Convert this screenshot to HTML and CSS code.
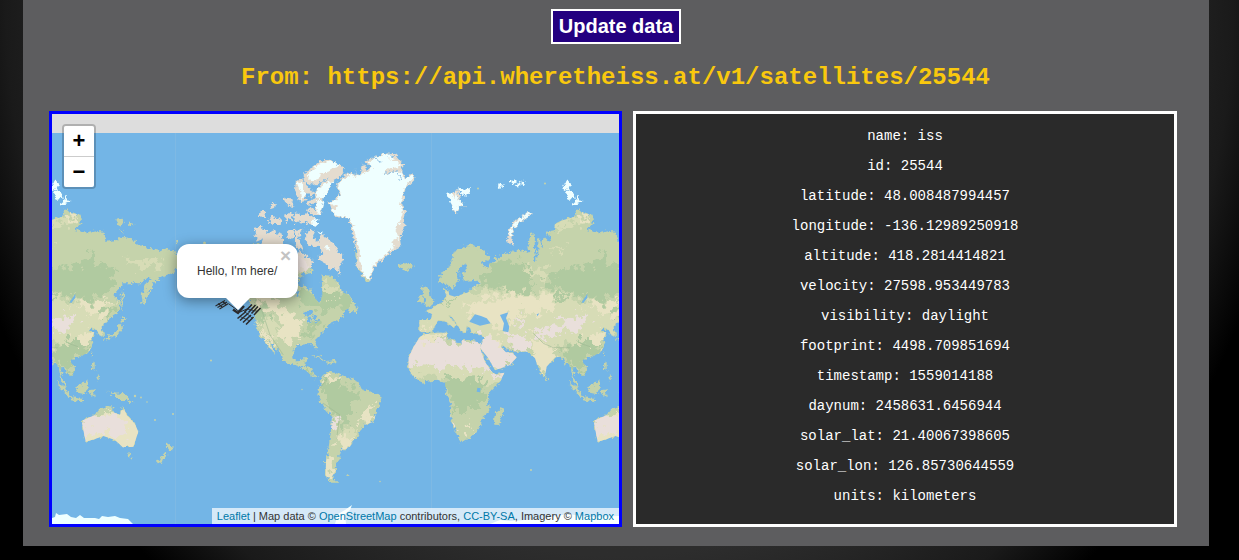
FILE: index.html
```
<!DOCTYPE html>
<html lang="en">
<head>
<meta charset="utf-8">
<title>ISS tracker</title>
<link rel="stylesheet" href="styles.css">
</head>
<body>
<main class="panel">
  <button class="update">Update data</button>
  <h2 class="source">From: https://api.wheretheiss.at/v1/satellites/25544</h2>
  <div class="columns">
    <section class="map">
      <svg class="world" viewBox="52 114 567 410" width="567" height="410">
        <defs>
          <filter id="rough" x="-5%" y="-5%" width="110%" height="110%" color-interpolation-filters="sRGB">
            <feTurbulence type="fractalNoise" baseFrequency=".09" numOctaves="3" seed="4" result="n"/>
            <feDisplacementMap in="SourceGraphic" in2="n" scale="20" xChannelSelector="R" yChannelSelector="G"/>
          </filter>
          <filter id="patchy" x="-20%" y="-20%" width="140%" height="140%" color-interpolation-filters="sRGB">
            <feTurbulence type="fractalNoise" baseFrequency=".045" numOctaves="4" seed="9" result="n"/>
            <feDisplacementMap in="SourceGraphic" in2="n" scale="70" xChannelSelector="R" yChannelSelector="G"/>
            <feGaussianBlur stdDeviation="1.5"/>
          </filter>
          <path id="eurasia" d="M58 645L92 645 97 628 78 618 95 612 110 600 130 590 140 575 132 553 142 550 148 570 165 575 205 562 222 543 245 536 230 524 192 528 188 510 202 480 192 476 174 502 176 530 160 552 146 545 134 535 118 530 118 515 128 500 145 490 155 465 165 440 190 425 215 418 235 428 262 448 272 460 262 470 245 468 250 485 266 488 270 472 285 472 288 455 297 462 305 450 330 443 355 432 375 440 388 445 385 420 390 390 405 388 404 430 408 450 398 468 412 462 412 400 420 400 425 430 430 395 445 410 450 400 440 380 462 376 465 358 490 345 525 335 535 310 550 325 578 330 582 350 560 375 600 385 628 378 646 380 653 410 686 405 696 395 721 398 756 420 781 430 816 438 831 430 863 440 880 470 861 500 816 520 796 535 786 560 764 600 761 570 776 535 791 515 771 520 756 535 706 535 676 570 696 590 693 620 676 630 651 655 640 665 648 690 636 692 626 675 611 667 601 680 619 682 611 700 616 715 601 742 571 758 556 758 546 768 561 790 556 808 546 813 531 795 519 785 521 815 536 840 531 848 516 820 513 785 501 775 495 778 485 755 465 757 440 785 435 813 428 817 415 790 405 760 395 750 380 740 345 740 325 735 305 718 303 727 318 742 335 742 350 757 330 780 285 796 265 760 240 728 248 710 245 690 215 683 210 668 200 662 198 683 183 677 165 648 150 630 145 632 170 660 160 667 135 648 115 645 95 680 65 682 58 678Z"/>
          <path id="africa" d="M60 695L75 688 110 683 140 683 142 697 180 716 187 705 215 708 243 713 240 730 255 770 275 800 285 808 313 803 300 830 268 865 262 880 268 918 245 938 243 963 210 1003 180 1009 172 990 160 960 148 925 153 890 137 862 135 833 115 825 62 833 40 817 25 790 25 760 40 727Z"/>
          <path id="australia" d="M581 947L621 930 636 912 656 903 676 905 676 922 696 930 703 900 716 930 741 957 751 980 736 1025 706 1028 681 1005 646 993 621 1002 593 1010 586 975Z"/>
          <path id="namerica" d="M-60 430L100 415 160 440 200 470 215 500 180 510 175 540 215 555 225 580 240 597 247 570 245 510 275 512 300 540 305 560 330 572 340 600 350 620 318 612 315 630 295 645 270 657 250 680 225 705 232 735 220 722 208 717 175 720 160 738 160 760 175 773 190 760 203 760 195 785 218 790 218 810 235 818 225 820 198 797 175 783 130 770 125 750 100 722 85 705 108 750 78 715 60 690 47 660 45 625 28 590-10 560Z"/>
          <path id="samerica" d="M245 815L270 800 305 810 355 830 365 852 410 865 427 880 410 915 402 950 372 960 350 1000 335 1010 330 1028 305 1035 300 1050 290 1075 287 1098 275 1115 295 1133 270 1133 257 1110 258 1070 267 1020 272 985 276 935 252 908 232 870 240 838Z"/>
          <clipPath id="cEast"><use href="#eurasia"/><use href="#africa"/><use href="#australia"/></clipPath>
          <clipPath id="cWest"><use href="#namerica"/><use href="#samerica"/></clipPath>
          <g id="east">
            <g filter="url(#rough)">
              <g class="land">
                <use href="#eurasia"/><use href="#africa"/><use href="#australia"/>
                <path d="M311 905L311 925 295 963 283 962 282 945 285 925Z M435 810L445 822 440 828Z M722 1044L729 1044 727 1058 718 1055Z M836 1012L857 1027 848 1042 838 1035Z M832 1040L838 1048 818 1077 806 1072Z"/>
                <path d="M70 543L84 548 88 570 100 585 97 600 76 604 82 590 74 575Z M54 578L70 568 70 590 54 595Z M506 828L530 845 550 876 540 875 520 855Z M561 848L590 830 602 822 600 845 590 868 570 863Z M548 876L588 883 585 892 548 886Z M606 855L625 852 614 862 622 875 612 866 608 875Z M655 855L678 865 710 868 737 895 715 885 690 885 680 870Z M612 772L620 775 620 795 630 800 612 793Z M625 806L637 815 632 827Z M614 742L609 756 609 745Z M702 553L708 570 705 598 700 620 700 595Z M697 635L715 645 702 654Z M700 655L702 675 692 690 670 695 665 700 650 705 658 694 683 683 690 665Z"/>
                <path d="M682 343L700 338 712 350 700 362 685 355Z M720 352L740 358 730 362Z M695 376L708 382 698 384Z M860 412L872 408 872 415Z"/>
              </g>
              <g class="tundra">
                <path d="M320 412L328 372 343 346 360 338 388 320 392 330 370 347 352 357 340 380 334 402 342 420Z M158 262L175 252 180 285 196 312 184 304 176 312 166 326 155 300Z"/>
              </g>
              <g class="ice">
                <path d="M142 263L155 262 163 280 168 258 176 280 182 292 192 298 192 306 184 300 176 308 166 322 157 300 148 288Z M175 248L188 252 210 250 208 265 195 275 178 262Z M326 395L332 372 346 350 360 340 388 322 390 330 370 345 350 355 338 378 332 400Z"/>
                <path d="M290 240L300 238 310 235 300 250Z M300 246L314 240 310 250Z M330 238L345 222 350 230 340 242Z M346 244L358 233 364 244Z M362 235L374 226 374 238Z M488 245L500 225 513 240 508 252 492 258Z M496 258L518 254 524 282 506 284Z M532 273L547 290 520 302Z"/>
              </g>
            </g>
            <g clip-path="url(#cEast)">
              <g filter="url(#patchy)">
                <path class="pale" d="M60 570L200 560 330 555 470 560 560 590 690 590 640 690 500 720 380 740 230 690 40 700 40 640Z M20 780L280 775 310 830 250 850 120 815 20 815Z M365 500L440 485 440 520 390 515Z M460 350L560 330 570 350 470 370Z M440 430L500 430 490 445Z M720 470L800 455 840 480 760 490Z"/>
                <path class="green" d="M235 510L300 470 350 465 385 500 400 550 345 570 300 545 240 545Z M440 510L520 490 580 480 610 440 620 480 675 485 685 540 600 590 500 560 450 545Z M135 820L250 815 250 850 240 915 160 915 150 860Z M490 740L540 705 610 705 600 745 560 765 560 800 500 780Z M440 575L520 560 500 580Z M625 630L690 600 680 630 650 650Z M120 590L170 580 150 595Z"/>
                <path class="sand" d="M200 600L260 575 450 570 470 600 430 625 340 625 320 690 250 640 200 630Z M60 665L90 665 80 680Z M390 690L480 740 430 810 400 770Z M60 690L140 685 130 700 60 710Z M560 700L600 670 620 700 590 730Z M550 605L660 580 640 640 600 620Z M250 690L290 690 340 750 300 740Z M200 960L225 975 205 985Z M570 940L770 890 765 1040 570 1020Z M520 325L570 330 560 350Z"/>
                <path class="desert" d="M10 725L50 705 140 710 180 710 265 705 275 795 220 790 140 785 10 778Z M245 690L285 695 310 740 360 750 335 790 285 800 250 730Z M320 685L380 695 385 740 340 735Z M405 690L450 660 530 630 565 640 535 680 480 680 430 700Z M335 630L370 640 360 670Z M565 940L640 930 720 940 715 995 660 980 575 990Z M140 915L155 945 175 985 165 995 140 930Z M285 800L315 800 295 820Z"/>
              </g>
              <path class="water" d="M208 650L225 628 243 633 260 640 272 655 240 662Z M300 630L325 622 318 640 328 665 325 682 308 678 312 655Z M232 848L242 850 240 862 230 860Z M410 628L418 625 412 634Z M545 592L562 566 562 578 550 594Z"/>
              <path class="ridge" d="M400 685L430 715 460 728 510 728M540 715L570 725"/>
            </g>
          </g>
        </defs>
        <rect class="water" x="52" y="133" width="567" height="391"/>
        <path class="seam" d="M175.500 133V524M431.500 133V524"/>
        <g transform="translate(400 105) scale(.33333)"><use href="#east"/><use href="#east" x="-1536"/></g>
        <g transform="translate(240 105) scale(.33333)">
          <g filter="url(#rough)">
            <g class="land">
              <use href="#namerica"/><use href="#samerica"/>
              <path d="M216 750L235 752 260 768 235 760Z M262 768L282 765 288 772 262 776Z M318 555L345 600 340 610 325 595Z M330 600L352 605 352 622 328 622Z M313 1110L330 1106 322 1114Z M475 480L490 472 515 475 518 485 500 497 482 492Z M545 545L555 543 563 560 570 580 580 585 575 600 555 602 560 588 550 570Z M535 578L550 568 548 592 534 594Z M346 420L358 440 362 475 375 510 390 530 375 528 352 490 346 455Z"/>
            </g>
            <g class="tundra">
              <path d="M42 368L62 365 82 375 70 400 50 408Z M75 385L105 375 110 390 125 382 130 425 60 425Z M85 350L98 330 105 342 125 340 122 360 95 360Z M52 335L68 315 80 320 70 338Z M93 295L108 290 104 308 92 312Z M128 275L140 282 148 278 168 308 155 308 135 290Z M132 332L155 325 160 350 148 342 140 352Z M160 320L185 328 200 325 235 350 230 362 185 352 165 355Z M145 375L162 375 158 400 142 402Z M165 375L187 372 176 395 190 440 165 420Z M198 380L225 375 215 400 235 410 245 385 262 398 290 430 312 470 298 480 300 510 285 490 262 495 262 478 230 460 250 450 235 425 210 425 195 400Z M175 440L205 455 220 470 205 495 175 508Z M200 382L218 376 210 395Z"/>
              <path d="M168 225L188 220 205 250 225 262 215 280 200 262 195 288 182 292 165 255Z M190 205L215 190 240 170 265 163 315 188 300 215 280 225 270 250 250 280 243 330 225 330 200 318 205 305 225 312 228 295 205 300 205 285 230 280 222 262 250 232 220 240 195 230Z"/>
              <path d="M265 293L290 278 300 265 288 240 310 212 335 200 345 212 365 200 360 185 372 178 385 192 395 185 375 170 405 155 440 145 465 148 480 165 492 182 480 195 500 215 515 206 527 218 500 245 490 270 487 300 498 320 492 345 494 370 480 400 484 425 450 444 430 462 400 488 390 528 368 514 350 480 350 440 342 410 335 370 325 340 290 337 275 320Z"/>
            </g>
            <g class="ice">
              <path d="M268 295L290 282 304 265 292 242 312 218 335 205 345 216 368 205 385 200 400 185 385 172 405 160 440 148 460 152 470 166 445 160 475 175 485 185 450 190 430 205 465 202 480 200 495 220 515 210 520 220 498 243 487 270 480 300 488 325 482 350 465 370 475 400 455 410 465 430 445 438 428 456 398 482 388 525 370 510 362 475 358 430 350 410 342 370 328 338 290 332 275 318 295 305Z"/>
              <path d="M200 215L215 195 240 175 265 168 300 178 265 200 240 205 235 225 215 230Z M170 235L185 230 197 268 185 285 180 260Z M230 255L265 230 280 230 262 258 250 280 232 280Z M215 345L235 342 233 362 218 360Z M256 418L272 430 262 436Z M232 378L247 384 240 390Z M228 285L252 285 238 330 230 318Z"/>
            </g>
            <path class="inlet" d="M190 230L205 242 235 240 262 220M205 262L215 285M345 190L352 212M365 175L385 195M395 155L425 172M435 205L470 200 482 225M465 155L440 152"/>
          </g>
          <g clip-path="url(#cWest)">
            <g filter="url(#patchy)">
              <path class="sand" d="M30 570L100 570 140 620 190 650 175 700 150 720 110 700 130 650 70 600Z M295 985L340 1000 340 1040 295 1035Z M245 1060L275 1060 280 1120 250 1120Z M45 650L80 690 110 750 70 700Z M250 850L270 810 300 810 270 850Z M350 960L400 890 390 950Z"/>
              <path class="green" d="M170 560L330 560 330 610 240 620 180 600Z M50 590L80 620 80 650 50 650Z M190 680L230 640 240 670 200 700Z M245 830L290 830 330 850 370 860 330 900 330 950 305 975 290 920 250 890Z M185 775L220 790 215 810 190 790Z"/>
              <path class="pale" d="M80 630L110 660 120 720 70 680Z M310 980L350 960 340 1000 310 1000Z M230 545L290 540 300 570 250 570Z"/>
              <path class="desert" d="M276 925L292 940 288 980 272 975Z M100 440L190 450 210 500 160 500Z"/>
            </g>
            <path class="ridge" d="M240 850L270 810M250 895L300 930 290 1000M60 600L90 690 130 750"/>
          </g>
          <path class="water" filter="url(#rough)" d="M188 625L210 614 222 628 200 632Z M203 635L213 635 208 657 201 652Z M215 632L230 632 228 645 220 646Z M222 650L242 643 232 654Z M165 550L178 572 168 578Z"/>
        </g>
        <g class="ice">
          <path d="M52 518L55 517 56 513 59 515 67 514 71 517 76 518 80 515 84 518 95 518 99 519 102 516 108 517 115 516 120 518 128 519 134 525H52Z M490 524L500 520 510 521 540 519 568 514 590 517 619 516V525H490Z M335 524L338 514 345 510 352 505 350 510 345 514 346 524Z"/>
        </g>
        <g class="land">
          <circle cx="211" cy="360.500" r="1"/><circle cx="173" cy="414" r="1"/><circle cx="155" cy="420" r="1"/><circle cx="147" cy="402" r=".8"/><circle cx="141" cy="397.500" r=".9"/><circle cx="135" cy="396" r="1.200"/><circle cx="302" cy="389.500" r=".7"/><circle cx="531" cy="470" r="1"/><circle cx="380" cy="481.500" r=".8"/><circle cx="204.500" cy="243" r="1.500"/><circle cx="478" cy="188.500" r="1"/><circle cx="545" cy="183.500" r="1"/>
        </g>
        <g class="iss">
          <path d="M215.500 306L225 300.500M217.500 307.500L227 302M219.500 309L228.500 303.500M222 307L218 303.500M226 304.500L222.500 301.500" stroke-width="1.100"/>
          <path d="M229 304L240 312 247 309" stroke-width="1"/>
          <path d="M233 309.500L238 313 244 306" stroke-width="2.400"/>
          <path d="M245 311.500L252 304.500M248.500 312.500L255.500 305M251.500 313.500L258 306.500M254 315L260.500 308M237.500 318.500L246 311.500M240 320.500L248.500 313M243 322.500L251 315M246 324.500L253.500 317" stroke-width="1.600"/>
          <path d="M247 309L258 311.500M240 316.500L250 321M244 311L252 318" stroke-width=".8"/>
        </g>
      </svg>
      <div class="zoom"><span class="zoom-btn">+</span><span class="zoom-btn">−</span></div>
      <div class="popup">Hello, I'm here/<span class="close">×</span><i class="tip"></i></div>
      <div class="credit"><a>Leaflet</a> | Map data © <a>OpenStreetMap</a> contributors, <a>CC-BY-SA</a>, Imagery © <a>Mapbox</a></div>
    </section>
    <section class="data">
      <p>name: iss</p>
      <p>id: 25544</p>
      <p>latitude: 48.008487994457</p>
      <p>longitude: -136.12989250918</p>
      <p>altitude: 418.2814414821</p>
      <p>velocity: 27598.953449783</p>
      <p>visibility: daylight</p>
      <p>footprint: 4498.709851694</p>
      <p>timestamp: 1559014188</p>
      <p>daynum: 2458631.6456944</p>
      <p>solar_lat: 21.40067398605</p>
      <p>solar_lon: 126.85730644559</p>
      <p>units: kilometers</p>
    </section>
  </div>
</main>
</body>
</html>
```
FILE: styles.css
```
* { box-sizing: border-box; }
body {
  margin: 0;
  height: 560px;
  overflow: hidden;
  background: radial-gradient(ellipse 682px 772px at 50% 0, #333 0%, #2d2d2d 72%, #1a1a1a 90%, #000 100%) #000;
}
.panel {
  width: 1186px;
  height: 546px;
  margin-left: 23px;
  padding: 9px 32px 0 26px;
  background: #5d5d5f;
  display: flex;
  flex-direction: column;
  align-items: center;
}
.update {
  width: 130px;
  height: 35px;
  margin-left: 6px;
  padding: 0 0 2px;
  border: 2px solid #fff;
  background: #230080;
  color: #fff;
  font: bold 20px/28px "Liberation Sans", Arial, sans-serif;
}
.source {
  margin: 20px 0 19px 5px;
  height: 28px;
  color: #f9c80e;
  font: bold 24px/28px "Liberation Mono", "Courier New", monospace;
  white-space: nowrap;
}
.columns { display: flex; gap: 11px; width: 1128px; }
.map {
  position: relative;
  width: 573px;
  height: 416px;
  border: 3px solid #00f;
  background: #ddd;
  overflow: hidden;
  font-family: "Liberation Sans", Arial, sans-serif;
}
.world { display: block; }
.water { fill: #73b5e6; }
.land { fill: #c5d3ab; }
.tundra { fill: #e4dccf; }
.pale { fill: #d7dcb6; }
.green { fill: #b0caa0; }
.sand { fill: #e8e3c3; }
.desert { fill: #e9dfdb; }
.ice { fill: #efffff; }
.inlet { fill: none; stroke: #8fc0e2; stroke-width: 3; }
.ridge { fill: none; stroke: #9eb892; stroke-width: 3; opacity: .6; }
.seam { stroke: #86bde2; stroke-width: 1; opacity: .6; fill: none; }
.iss { fill: none; stroke: #2c2c2e; }
.zoom {
  position: absolute;
  left: 10px;
  top: 10px;
  width: 34px;
  height: 65px;
  border: 2px solid rgba(0, 0, 0, .2);
  border-radius: 4px;
  background-clip: padding-box;
}
.zoom-btn {
  display: block;
  height: 30px;
  background: #fff;
  color: #000;
  text-align: center;
  font: bold 22px/30px "Liberation Sans", Arial, sans-serif;
}
.zoom-btn:first-child { height: 31px; border-bottom: 1px solid #ccc; border-radius: 2px 2px 0 0; }
.zoom-btn:last-child { border-radius: 0 0 2px 2px; }
.popup {
  position: absolute;
  left: 125px;
  top: 130px;
  width: 121px;
  height: 54px;
  padding-left: 20px;
  border-radius: 12px;
  background: #fff;
  color: #333;
  font-size: 12px;
  line-height: 54px;
  white-space: nowrap;
  box-shadow: 0 3px 14px rgba(0, 0, 0, .4);
}
.close {
  position: absolute;
  right: 0;
  top: 5px;
  width: 25px;
  color: #c3c3c3;
  text-align: center;
  font: bold 19px/14px "Liberation Sans", Arial, sans-serif;
}
.tip {
  position: absolute;
  left: 48px;
  top: 53px;
  width: 26px;
  height: 13px;
  background: #fff;
  clip-path: polygon(0 0, 100% 0, 50% 100%);
}
.credit {
  position: absolute;
  right: 0;
  bottom: 0;
  height: 16px;
  padding: 0 5px;
  background: rgba(255, 255, 255, .7);
  color: #333;
  font-size: 11px;
  line-height: 17px;
  white-space: nowrap;
}
.credit a { color: #0078a8; }
.data {
  width: 544px;
  height: 416px;
  padding-top: 7px;
  border: 3px solid #fff;
  background: #2a2a2a;
  color: #fff;
  text-align: center;
  font: 14px/30px "Liberation Mono", "Courier New", monospace;
}
.data p { margin: 0; }
```
